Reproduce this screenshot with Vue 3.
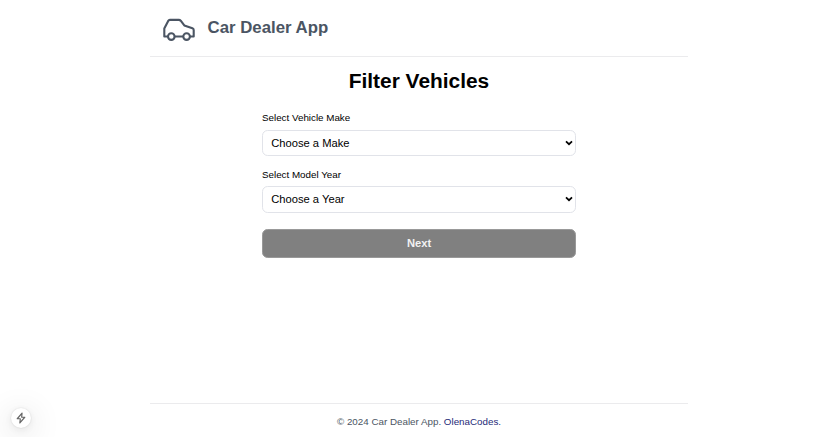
<script setup>
import { ref } from 'vue'

const make = ref('')
const year = ref('')
const makes = ['Audi', 'BMW', 'Ford', 'Honda', 'Toyota']
const years = [2024, 2023, 2022, 2021, 2020]
</script>

<template>
  <div class="page">
    <header class="header">
      <svg class="logo" viewBox="0 0 32 24" fill="none" stroke="currentColor" stroke-width="2.1" stroke-linejoin="round" stroke-linecap="round">
        <path d="M4.7 19.5H1.3V11.4L5.2 3.9Q5.8 2.9 6.8 2.9H15.8Q17 2.9 17.7 3.7L21.3 8.4L29.4 11.3Q30.7 11.8 30.7 13.1V19.5H27.3M11.9 19.5H19.9" />
        <circle cx="8.3" cy="19.6" r="3.3" />
        <circle cx="23.6" cy="19.6" r="3.3" />
      </svg>
      <span class="brand">Car Dealer App</span>
    </header>

    <main class="main">
      <h1 class="title">Filter Vehicles</h1>
      <form class="form" @submit.prevent>
        <div class="field">
          <label for="make">Select Vehicle Make</label>
          <div class="control">
            <select id="make" v-model="make">
              <option value="">Choose a Make</option>
              <option v-for="m in makes" :key="m" :value="m">{{ m }}</option>
            </select>
            <svg class="chevron" viewBox="0 0 8 6" fill="none" stroke="currentColor" stroke-width="1.7"><path d="M1 1.3L4 4.2L7 1.3" /></svg>
          </div>
        </div>
        <div class="field">
          <label for="year">Select Model Year</label>
          <div class="control">
            <select id="year" v-model="year">
              <option value="">Choose a Year</option>
              <option v-for="y in years" :key="y" :value="y">{{ y }}</option>
            </select>
            <svg class="chevron" viewBox="0 0 8 6" fill="none" stroke="currentColor" stroke-width="1.7"><path d="M1 1.3L4 4.2L7 1.3" /></svg>
          </div>
        </div>
        <button class="next" type="submit" :disabled="!make || !year">Next</button>
      </form>
    </main>

    <footer class="footer">© 2024 Car Dealer App. <a href="#">OlenaCodes.</a></footer>

    <div class="indicator">
      <svg viewBox="0 0 16 16" fill="none" stroke="currentColor" stroke-width="1.6" stroke-linejoin="round">
        <path d="M9.4 1.4L3 9H7.1L6.5 14.6L13 7H8.9Z" />
      </svg>
    </div>
  </div>
</template>

<style>
body {
  background: #fff;
}
</style>

<style scoped>
.page {
  box-sizing: border-box;
  display: flex;
  flex-direction: column;
  width: 538px;
  height: 437px;
  margin: 0 0 0 calc(50% - 269.5px);
  font-family: "Liberation Sans", Arial, sans-serif;
  color: #000;
}
.header {
  box-sizing: border-box;
  display: flex;
  align-items: center;
  gap: 12.6px;
  height: 57px;
  padding: 0 12px 0 13px;
  border-bottom: 1px solid #ebebed;
  color: #4b5563;
}
.logo {
  width: 32px;
  height: 24px;
  margin-top: 2px;
}
.brand {
  font-size: 16.8px;
  line-height: 24px;
  font-weight: 700;
  margin-top: -1px;
}
.main {
  flex: 1;
  padding-top: 11px;
}
.title {
  margin: 0;
  font-size: 20.9px;
  line-height: 26px;
  font-weight: 700;
  text-align: center;
}
.form {
  width: 314px;
  margin: 17.4px auto 0;
}
.field {
  margin-bottom: 11.6px;
}
.field label {
  display: block;
  margin-bottom: 4.4px;
  font-size: 9.8px;
  line-height: 14px;
}
.control {
  position: relative;
}
.control select {
  appearance: none;
  box-sizing: border-box;
  display: block;
  width: 100%;
  height: 26.4px;
  padding: 0 8.2px;
  border: 1px solid #e1e3e9;
  border-radius: 5.6px;
  background-color: #fff;
  color: #000;
  font-family: inherit;
  font-size: 11.2px;
}
.chevron {
  position: absolute;
  right: 3px;
  top: 10px;
  width: 8px;
  height: 6px;
  pointer-events: none;
}
.next {
  display: block;
  width: 100%;
  height: 28.4px;
  margin-top: 16.6px;
  padding: 0;
  border: 1px solid #999;
  border-radius: 5.6px;
  background: #808080;
  color: #f2f2f2;
  font-family: inherit;
  font-size: 11.2px;
  font-weight: 700;
}
.footer {
  box-sizing: border-box;
  height: 34px;
  padding-top: 11px;
  border-top: 1px solid #ebebed;
  color: #4b5563;
  font-size: 9.8px;
  line-height: 14px;
  text-align: center;
}
.footer a {
  color: #1e2a78;
  text-decoration: none;
}
.indicator {
  position: fixed;
  left: 11px;
  bottom: 9px;
  display: flex;
  align-items: center;
  justify-content: center;
  width: 20px;
  height: 20px;
  border-radius: 50%;
  background: #fff;
  color: #666;
  box-shadow: 0 0 2px rgba(0, 0, 0, 0.14), 0 2px 10px rgba(0, 0, 0, 0.08), 0 6px 32px rgba(0, 0, 0, 0.2);
}
.indicator svg {
  width: 12px;
  height: 12px;
}
</style>
